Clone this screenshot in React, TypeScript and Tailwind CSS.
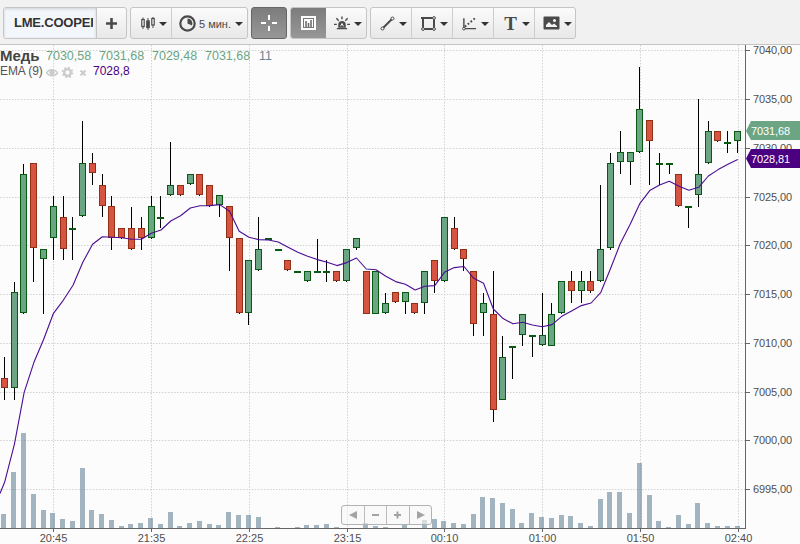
import React from 'react'

type Tone = 'up' | 'down' | 'flat'

interface Candle {
  high: number
  top: number
  bottom: number
  low: number
  tone: Tone
}

const up = (high: number, top: number, bottom: number, low: number): Candle => ({ high, top, bottom, low, tone: 'up' })
const down = (high: number, top: number, bottom: number, low: number): Candle => ({ high, top, bottom, low, tone: 'down' })
const flat = (high: number, top: number, low: number): Candle => ({ high, top, bottom: top + 2, low, tone: 'flat' })

const CANDLES: Candle[] = [
  down(357, 378, 388, 400), up(282, 292, 388, 400), up(164, 174, 313, 314), down(163, 163, 248, 282), up(249, 249, 259, 314),
  up(196, 206, 238, 260), down(196, 217, 249, 260), flat(217, 228, 260), up(121, 163, 216, 217), down(153, 163, 173, 185),
  down(174, 185, 206, 217), down(196, 206, 238, 250), down(228, 228, 238, 239), down(207, 228, 249, 250), down(217, 228, 238, 250),
  up(196, 206, 238, 239), flat(196, 217, 228), up(142, 185, 195, 196), down(185, 185, 195, 196), up(174, 174, 184, 185),
  down(174, 174, 195, 196), down(185, 185, 206, 207), up(195, 195, 205, 217), down(206, 206, 238, 271), down(238, 238, 313, 314),
  up(260, 260, 313, 325), up(217, 249, 270, 271), flat(238, 238, 240), flat(249, 249, 251), down(260, 260, 270, 271),
  flat(271, 271, 273), up(271, 271, 281, 282), flat(239, 271, 273), flat(260, 271, 282), down(271, 271, 281, 282),
  up(249, 249, 281, 282), up(238, 238, 248, 250), down(271, 271, 314, 314), up(271, 271, 314, 314), up(293, 303, 313, 314),
  down(292, 292, 302, 303), up(292, 292, 302, 314), down(303, 303, 313, 314), up(271, 271, 303, 314), down(260, 260, 281, 293),
  up(217, 217, 281, 282), down(217, 228, 249, 250), down(249, 249, 259, 271), down(271, 271, 324, 336), up(293, 303, 313, 336),
  down(271, 314, 410, 422), up(336, 357, 400, 400), flat(346, 346, 379), up(314, 314, 335, 346), flat(335, 335, 357),
  up(293, 335, 345, 346), up(303, 314, 346, 346), up(281, 281, 313, 314), down(271, 281, 291, 303), up(271, 281, 291, 303),
  down(271, 281, 291, 293), up(185, 249, 281, 282), up(153, 163, 248, 250), up(131, 152, 162, 174), up(152, 152, 162, 185),
  up(67, 109, 152, 153), down(120, 120, 141, 185), flat(153, 163, 185), flat(163, 163, 174), down(174, 174, 206, 207),
  flat(206, 206, 228), up(99, 174, 195, 207), up(121, 131, 163, 164), down(131, 131, 141, 142), flat(131, 142, 153),
  up(131, 131, 141, 153),
]

const VOLUMES = [
  14, 56, 95, 34, 18, 15, 9, 7, 60, 18, 14, 8, 2, 4, 5, 10, 4, 16, 2, 5, 7, 4, 3, 16, 13, 13, 11, 0, 1, 0,
  1, 3, 3, 4, 1, 0, 0, 5, 2, 1, 0, 4, 0, 8, 9, 7, 5, 4, 14, 31, 30, 25, 19, 5, 15, 11, 10, 13, 12, 5,
  2, 29, 36, 36, 15, 65, 33, 7, 1, 13, 4, 25, 5, 2, 2, 2,
]

const EMA = [
  482, 444, 392, 362, 339, 313, 300, 285, 262, 244, 236.5, 237, 237.5, 239, 239, 233, 229.7, 220.7, 215.5, 207.7,
  205.5, 205.3, 204.3, 210.7, 231, 237, 239.3, 239.7, 241.7, 247, 252, 256, 259.3, 262, 265.3, 262.3, 257.7, 268.7,
  269.5, 276, 281.3, 284, 289.7, 286, 285.3, 272, 267.3, 266.2, 278, 283, 308.7, 318.3, 323.5, 322, 324.7, 326.5,
  324.3, 316, 310.7, 305.3, 302.7, 292, 268, 243, 224, 203, 190.3, 184.7, 181, 186, 190, 187, 175.7, 169.3, 164, 159.3,
]

const PRICES = [
  { label: '7040,00', y: 50 },
  { label: '7035,00', y: 99 },
  { label: '7030,00', y: 148 },
  { label: '7025,00', y: 197 },
  { label: '7020,00', y: 245 },
  { label: '7015,00', y: 294 },
  { label: '7010,00', y: 343 },
  { label: '7005,00', y: 392 },
  { label: '7000,00', y: 440 },
  { label: '6995,00', y: 489 },
]

const TIMES = [
  { label: '20:45', x: 53 },
  { label: '21:35', x: 151 },
  { label: '22:25', x: 249 },
  { label: '23:15', x: 347 },
  { label: '00:10', x: 444 },
  { label: '01:00', x: 542 },
  { label: '01:50', x: 640 },
  { label: '02:40', x: 738 },
]

const FILL: Record<Tone, string> = { up: '#6ba583', down: '#d75442', flat: '#085a12' }
const BORDER: Record<Tone, string> = { up: '#085a12', down: '#923016', flat: '#085a12' }

const xAt = (i: number) => 4.4 + i * 9.775

// The svg starts under the 45px toolbar, its viewBox keeps window coordinates
function Chart() {
  const ema = ['0,493.5', ...EMA.map((y, i) => `${xAt(i) + 0.2},${y + 0.3}`)].join(' ')

  return (
    <svg className="block h-[499px] w-[800px]" viewBox="0 45 800 499" fontFamily="'Liberation Sans', Arial, sans-serif">
      <g stroke="#d2d2d2" strokeDasharray="1.5 1.5">
        {PRICES.map(p => (
          <line key={p.label} x1="0" x2="745" y1={p.y + 0.5} y2={p.y + 0.5} />
        ))}
        {TIMES.map(t => (
          <line key={t.label} x1={t.x + 0.5} x2={t.x + 0.5} y1="45" y2="528" />
        ))}
      </g>

      <g fill="#648496" fillOpacity="0.6">
        {VOLUMES.map((v, i) => (
          <rect key={i} x={Math.floor(xAt(i) - 2.5)} y={528 - v} width="5" height={v} />
        ))}
      </g>

      {CANDLES.map((c, i) => {
        const x = Math.floor(xAt(i))
        return (
          <g key={i}>
            <rect x={x} y={c.high} width="1" height={c.low - c.high} fill="#000" />
            {c.tone === 'flat' ? (
              <rect x={x - 3} y={c.top} width="7" height="2" fill={FILL.flat} />
            ) : (
              <rect
                x={x - 2.5}
                y={c.top + 0.5}
                width="6"
                height={c.bottom - c.top - 1}
                fill={FILL[c.tone]}
                stroke={BORDER[c.tone]}
              />
            )}
          </g>
        )
      })}
      <polyline points={ema} fill="none" stroke="#4b0d93" strokeWidth="1.1" strokeLinejoin="round" />

      {/* axes */}
      <g fill="#666">
        <rect x="745" y="45" width="1" height="484" />
        <rect x="0" y="528" width="746" height="1" />
        {PRICES.map(p => (
          <rect key={p.label} x="746" y={p.y} width="4" height="1" />
        ))}
        {TIMES.map(t => (
          <rect key={t.label} x={t.x} y="529" width="1" height="3" />
        ))}
      </g>
      <g fill="#4f4f4f" fontSize="11">
        {PRICES.map(p => (
          <text key={p.label} x="753" y={p.y + 4} textLength="39">{p.label}</text>
        ))}
        {TIMES.map(t => (
          <text key={t.label} x={t.x + 0.5} y="542" textAnchor="middle">{t.label}</text>
        ))}
      </g>

      {/* last values */}
      <path d="M746 131 L751 121 H800 V140 H751 Z" fill="#6ba583" />
      <path d="M746 158.500 L751 149 H800 V168 H751 Z" fill="#4b0082" />
      <g fill="#fff" fontSize="11">
        <text x="751" y="135" textLength="39">7031,68</text>
        <text x="751" y="163" textLength="39">7028,81</text>
      </g>
    </svg>
  )
}

function Caret() {
  return <span className="ml-[4px] mt-px h-0 w-0 border-x-[4px] border-t-[4px] border-x-transparent border-t-[#333]" />
}

function Group({ className, children }: { className: string; children: React.ReactNode }) {
  return (
    <div className={`flex h-[32px] shrink-0 overflow-hidden rounded-[3px] border border-[#c5c5c5] bg-linear-to-b from-[#fbfbfb] to-[#e8e8e8] ${className}`}>
      {children}
    </div>
  )
}

function Tool({ className, children }: { className?: string; children: React.ReactNode }) {
  return (
    <button className={`flex h-full shrink-0 items-center justify-end pr-[4px] ${className ?? 'w-[41px] border-r border-[#cdcdcd] last:border-r-0'}`}>
      {children}
      <Caret />
    </button>
  )
}

function Toolbar() {
  return (
    <header className="flex h-[45px] border-b border-[#c4c4c4] bg-[#f1f1f1] pl-[3px] pt-[7px] text-[#4a4a4a]">
      <Group className="w-[124px]">
        <div className="flex w-[93px] items-center border-r border-[#c5c5c5] bg-[#f3f6fa] pl-[10px] shadow-[inset_0_1px_3px_#ccd2d8]">
          <span className="w-[79px] overflow-hidden whitespace-nowrap text-[13px] font-bold tracking-[-0.2px] text-[#333]">LME.COOPER</span>
        </div>
        <button className="flex flex-1 items-center justify-center">
          <svg width="11" height="11" viewBox="0 0 11 11">
            <path d="M5.500 0V11M0 5.500H11" stroke="#4a4a4a" strokeWidth="2.600" />
          </svg>
        </button>
      </Group>

      <Group className="ml-[3px] w-[118px]">
        <Tool className="w-[41px] border-r border-[#cdcdcd]">
          <svg width="14" height="13" viewBox="0 0 14 13" fill="none" stroke="#4a4a4a">
            <path d="M2 0.500V12M7 1V13M12 0V11" />
            <rect x="0.800" y="2.500" width="2.400" height="7" fill="#fff" strokeWidth="1.200" />
            <rect x="5.800" y="4" width="2.400" height="6.500" fill="#4a4a4a" strokeWidth="1.200" />
            <rect x="10.800" y="1.500" width="2.400" height="6.500" fill="#fff" strokeWidth="1.200" />
          </svg>
        </Tool>
        <Tool className="flex-1">
          <svg width="17" height="17" viewBox="0 0 17 17">
            <circle cx="8.500" cy="8.500" r="7.200" fill="none" stroke="#4a4a4a" strokeWidth="2.200" />
            <path d="M8.500 3.500A5 5 0 0 1 13 10.500L8.500 8.500Z" fill="#4a4a4a" />
          </svg>
          <span className="ml-[3px] mt-[3px] whitespace-nowrap text-[11px] leading-none">5 мин.</span>
        </Tool>
      </Group>

      <button className="ml-[3px] flex h-[32px] w-[36px] shrink-0 items-center justify-center rounded-[3px] border border-[#666] bg-linear-to-b from-[#7c7c7c] to-[#979797]">
        <svg width="16" height="16" viewBox="0 0 16 16">
          <path d="M8 0V5M8 11V16M0 8H5M11 8H16" stroke="#fff" strokeWidth="2" />
        </svg>
      </button>

      <Group className="ml-[3px] w-[77px]">
        <button className="flex w-[35px] items-center justify-center bg-linear-to-b from-[#7c7c7c] to-[#979797]">
          <svg width="15" height="14" viewBox="0 0 15 14">
            <rect width="15" height="14" fill="#fff" />
            <rect x="2.500" y="2.500" width="10" height="9" fill="#fff" stroke="#777" />
            <path d="M5 11V5M7.500 11V7M10 11V4" stroke="#666" strokeWidth="1.500" />
          </svg>
        </button>
        <Tool className="flex-1">
          <svg width="16" height="14" viewBox="0 0 17 14" fill="none" stroke="#4a4a4a" strokeWidth="1.500">
            <path d="M4.500 12V9A4 4 0 0 1 12.500 9V12Z" fill="#4a4a4a" stroke="none" />
            <path d="M3 13H14M8.500 0V3M2.500 2L5 4.500M14.500 2L12 4.500M0 8.500H3M14 8.500H17" />
            <path d="M7 10.500L8.500 7.500L10 10.500" stroke="#fff" strokeWidth="1" />
          </svg>
        </Tool>
      </Group>

      <Group className="ml-[3px] w-[206px]">
        <Tool>
          <svg width="15" height="15" viewBox="0 0 15 15" fill="#f4f4f4" stroke="#4a4a4a">
            <path d="M3 12L12 3" strokeWidth="2" />
            <circle cx="2.500" cy="12.500" r="1.500" />
            <circle cx="12.500" cy="2.500" r="1.500" />
          </svg>
        </Tool>
        <Tool>
          <svg width="15" height="15" viewBox="0 0 15 15" fill="none" stroke="#4a4a4a">
            <path d="M0 2H13V13H2V2" strokeWidth="2" />
            <g fill="#f4f4f4">
              <circle cx="2" cy="13" r="1.400" />
              <circle cx="13" cy="13" r="1.400" />
              <circle cx="13" cy="2" r="1.400" />
            </g>
          </svg>
        </Tool>
        <Tool>
          <svg width="15" height="15" viewBox="0 0 16 15" fill="none" stroke="#4a4a4a">
            <path d="M2 2V13H15" strokeWidth="1.500" />
            <path d="M3 11L15 1" strokeWidth="2" strokeDasharray="2 2" />
            <circle cx="2" cy="13" r="1.400" fill="#f4f4f4" />
          </svg>
        </Tool>
        <Tool>
          <span className="mr-px w-[13px] text-center font-['Liberation_Serif',serif] text-[19px] font-bold leading-none">T</span>
        </Tool>
        <Tool>
          <svg width="17" height="14" viewBox="0 0 17 14">
            <rect x="0.500" y="0.500" width="16" height="13" rx="1" fill="#4a4a4a" />
            <path d="M3 11V9L6 6L9 9L11 7.500L14 10V11Z" fill="#f2f2f2" />
            <circle cx="11.500" cy="4.500" r="1.500" fill="#f2f2f2" />
          </svg>
        </Tool>
      </Group>
    </header>
  )
}

function Legend() {
  return (
    <div className="absolute left-0 top-[3px] whitespace-nowrap">
      <div className="flex h-[16px] items-center text-[12.500px] text-[#6ba583]">
        <span className="w-[46px] text-[15px] font-bold text-[#444]">Медь</span>
        <span className="w-[53px]">7030,58</span>
        <span className="w-[53px]">7031,68</span>
        <span className="w-[53px]">7029,48</span>
        <span className="w-[54px]">7031,68</span>
        <span className="text-[#648496]">11</span>
      </div>
      <div className="flex h-[13px] items-center text-[12px] text-[#555]">
        <span className="w-[46px] tracking-[-0.1px]">EMA (9)</span>
        <svg className="mt-[2px]" width="42" height="13" viewBox="0 0 42 13" fill="none" stroke="#cbcbcb">
          <path d="M0.500 8C3 3.500 9 3.500 11.500 8C9 11.500 3 11.500 0.500 8Z" strokeWidth="1.500" />
          <circle cx="6" cy="7.500" r="2.200" fill="#cbcbcb" />
          <circle cx="21.500" cy="7.500" r="3.300" strokeWidth="2.300" />
          <circle cx="21.500" cy="7.500" r="5" strokeWidth="1.500" strokeDasharray="2 1.930" />
          <path d="M34.500 5.500L39.500 10.500M39.500 5.500L34.500 10.500" strokeWidth="2" />
        </svg>
        <span className="ml-[5px] text-[#4b0082]">7028,8</span>
      </div>
    </div>
  )
}

function ZoomControls() {
  return (
    <div className="absolute left-[341px] top-[460px] flex h-[20px] w-[91px] divide-x divide-[#bbb] rounded-[3px] border border-[#b3b3b3] bg-[#f6f6f6]/60">
      {['M15 5V13L7 9Z', 'M7 9H14', 'M10.500 5.500V12.500M7 9H14', 'M7 5V13L15 9Z'].map((d, i) => (
        <button key={d} className="flex flex-1 items-center justify-center">
          <svg width="21" height="18" viewBox="0 0 21 18">
            <path d={d} fill={i === 0 || i === 3 ? '#a3a3a3' : 'none'} stroke="#a3a3a3" strokeWidth={i === 0 || i === 3 ? 0 : 2} />
          </svg>
        </button>
      ))}
    </div>
  )
}

export default function App() {
  return (
    <div className="h-[544px] w-[800px] overflow-hidden bg-[#fcfcfc] font-['Liberation_Sans',Arial,sans-serif]">
      <Toolbar />
      <main className="relative h-[499px]">
        <Chart />
        <Legend />
        <ZoomControls />
      </main>
    </div>
  )
}
